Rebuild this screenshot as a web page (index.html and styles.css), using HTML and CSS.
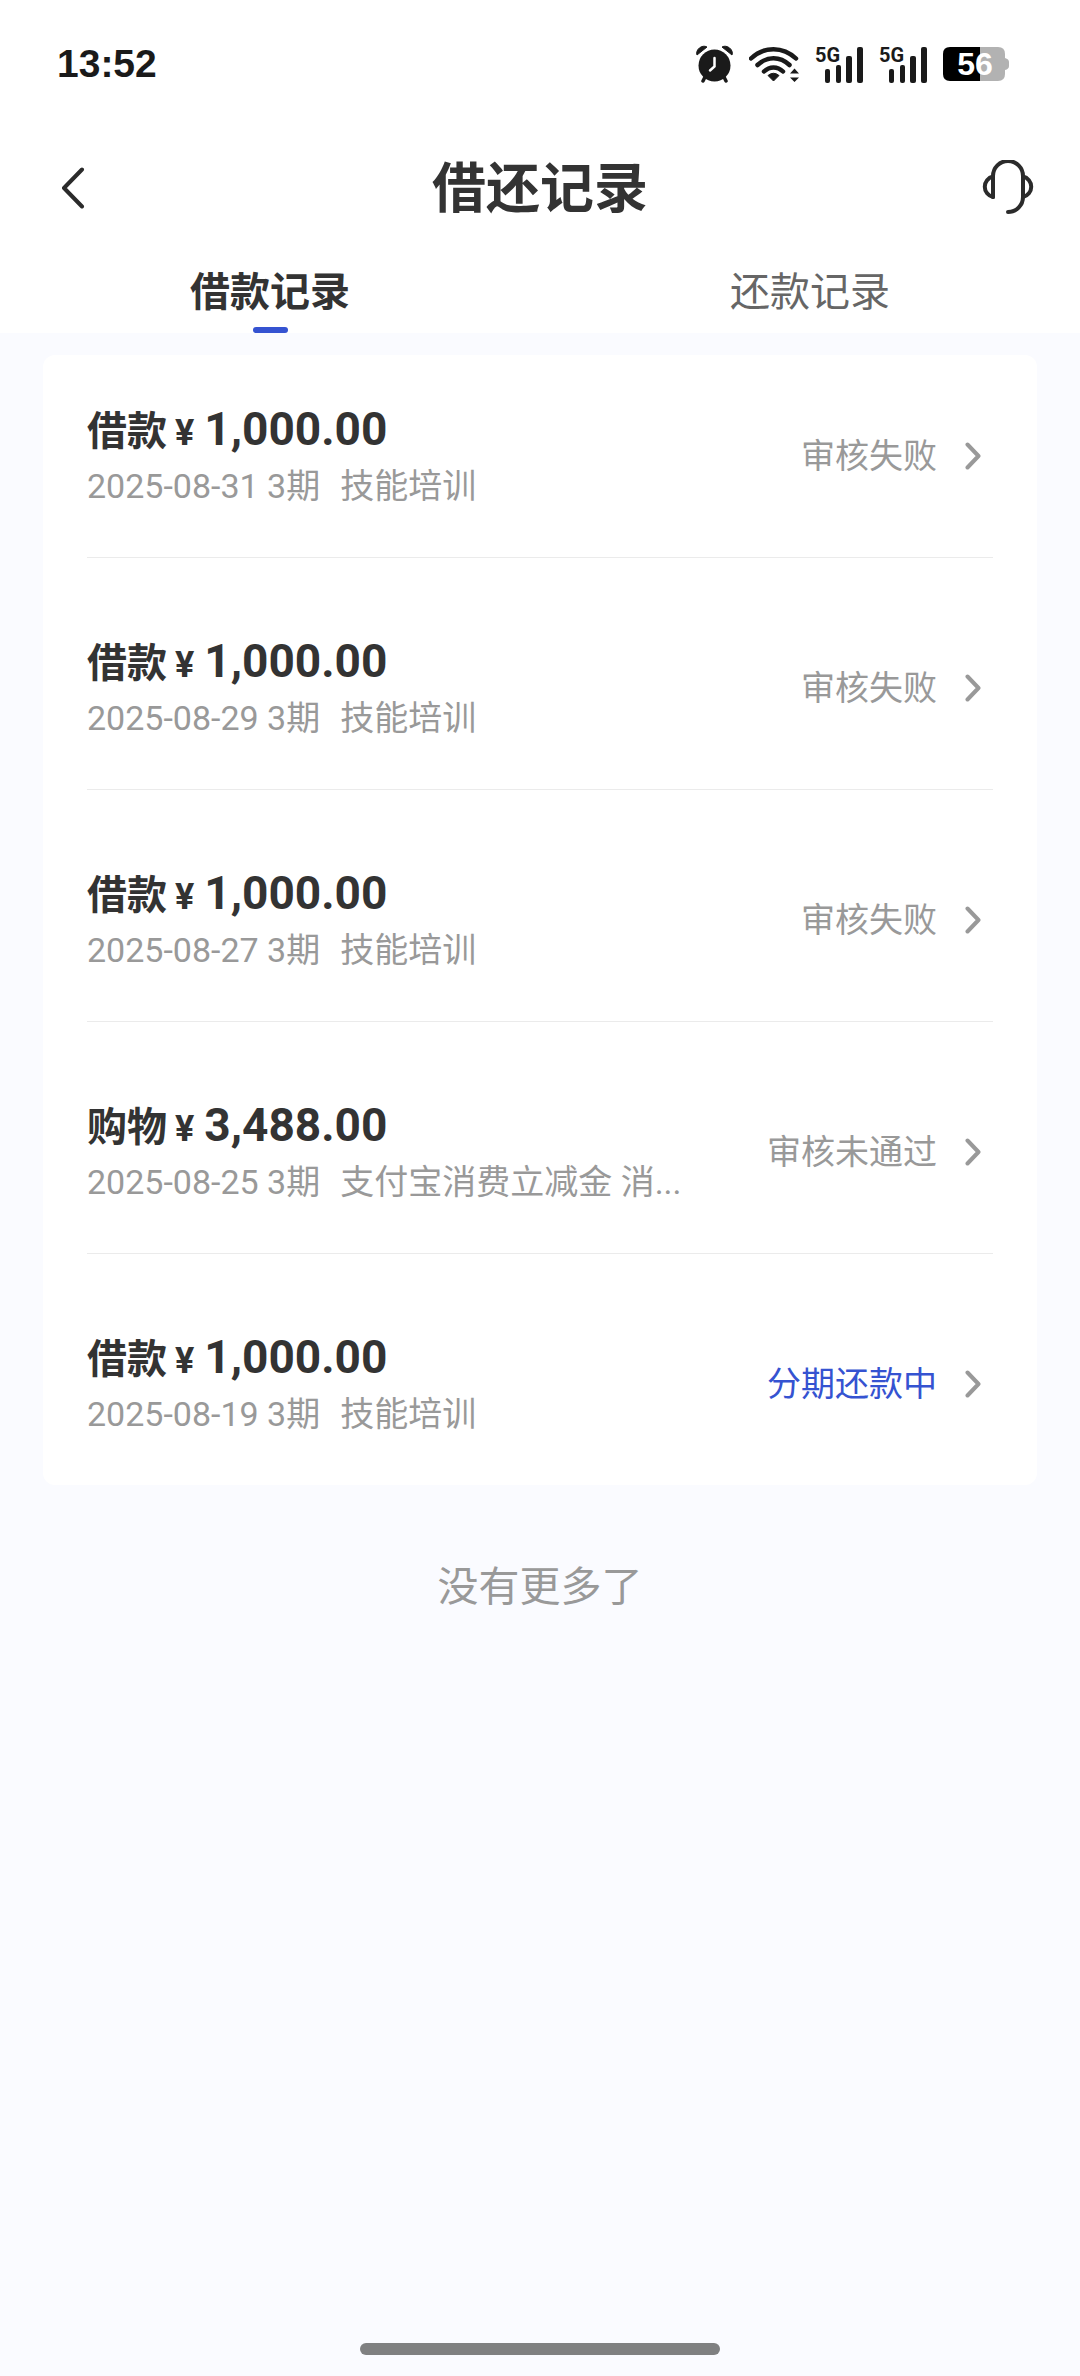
FILE: index.html
```html
<!DOCTYPE html>
<html lang="zh-CN">
<head>
    <meta charset="UTF-8">
    <meta name="viewport" content="width=device-width, initial-scale=1.0">
    <title>借还记录</title>
    <link rel="stylesheet" href="styles.css">
</head>
<body>
    <!-- Shared icons -->
    <svg class="sprite" aria-hidden="true">
        <symbol id="arrow" viewBox="0 0 16 28">
            <path d="M2.5 2.5L13.5 14L2.5 25.5" fill="none" stroke="#999" stroke-width="4" stroke-linecap="round" stroke-linejoin="round"/>
        </symbol>
        <symbol id="bars" viewBox="0 0 48 38">
            <rect x="10" y="24" width="5" height="14" rx="2"/>
            <rect x="21" y="20" width="5" height="18" rx="2"/>
            <rect x="31" y="11" width="6" height="27" rx="2"/>
            <rect x="42" y="2" width="6" height="36" rx="2"/>
        </symbol>
    </svg>

    <div class="status-bar">
        <span class="time">13:52</span>
        <div class="status-icons">
            <svg width="37" height="38" viewBox="0 0 37 38" fill="#1a1a1a">
                <path d="M1 10C-1 5 6-1 11 2Z" stroke="#1a1a1a" stroke-width="1" stroke-linejoin="round"/>
                <path d="M36 10C38 5 31-1 26 2Z" stroke="#1a1a1a" stroke-width="1" stroke-linejoin="round"/>
                <circle cx="18.5" cy="20.5" r="16"/>
                <path d="M9 32L7 36M28 32L30 36" stroke="#1a1a1a" stroke-width="3.5" stroke-linecap="round"/>
                <path d="M18.5 13V21.5L14 25.5" fill="none" stroke="#fff" stroke-width="2.5" stroke-linecap="round"/>
            </svg>
            <svg width="50" height="38" viewBox="0 0 50 38" fill="none" stroke="#1a1a1a" stroke-width="4.5">
                <path d="M2 13.5C15 1 34 1 47 13.5" stroke-linecap="round"/>
                <path d="M8.5 20C18 11 31 11 40.5 20" stroke-linecap="round"/>
                <path d="M15 26.5C20.5 21 28.5 21 34 26.5" stroke-linecap="round"/>
                <path d="M24.5 36L19 30.5Q24.5 26 30 30.5Z" fill="#1a1a1a" stroke-width="1" stroke-linejoin="round"/>
                <path d="M41 28.5L45.5 23.5L50 28.5ZM41 32.5L45.5 37L50 32.5Z" fill="#1a1a1a" stroke="none"/>
            </svg>
            <svg class="signal" width="48" height="38" fill="#1a1a1a">
                <text class="signal-text" x="0" y="17">5G</text>
                <use href="#bars"/>
            </svg>
            <svg class="signal" width="48" height="38" fill="#1a1a1a">
                <text class="signal-text" x="0" y="17">5G</text>
                <use href="#bars"/>
            </svg>
            <svg width="66" height="34" viewBox="0 0 66 34">
                <path d="M37 0H55Q62 0 62 7V11Q66 12 66 15V19Q66 22 62 23V27Q62 34 55 34H37Z" fill="#b2b2b2"/>
                <path d="M37 0H7Q0 0 0 7V27Q0 34 7 34H37Z" fill="#000"/>
                <text class="battery-text" x="32" y="28" text-anchor="middle">56</text>
            </svg>
        </div>
    </div>

    <header class="navbar">
        <button class="back" aria-label="返回">
            <svg width="24" height="42" viewBox="0 0 24 42">
                <path d="M21 2.5L3 21L21 39.5" fill="none" stroke="#2b2b2b" stroke-width="4" stroke-linecap="round" stroke-linejoin="round"/>
            </svg>
        </button>
        <h1>借还记录</h1>
        <button class="service" aria-label="客服">
            <svg width="56" height="56" viewBox="0 0 56 56" fill="none" stroke="#2b2b2b" stroke-width="4" stroke-linecap="round" stroke-linejoin="round">
                <path d="M13 37V16A15 15 0 0 1 43 16V37A15 15 0 0 1 28 52"/>
                <path d="M13 16.5A10.5 10.5 0 0 0 13 37"/>
                <path d="M43 16.5A10.5 10.5 0 0 1 43 37"/>
            </svg>
        </button>
    </header>

    <nav class="tabs">
        <button class="tab active">借款记录</button>
        <button class="tab">还款记录</button>
    </nav>

    <main>
        <div class="records">
            <a class="record" href="#">
                <div class="info">
                    <div class="title">借款<span class="currency">¥</span><span class="amount">1,000.00</span></div>
                    <div class="detail"><span>2025-08-31 3期</span><span class="product">技能培训</span></div>
                </div>
                <span class="state">审核失败</span>
                <svg class="arrow"><use href="#arrow"/></svg>
            </a>
            <a class="record" href="#">
                <div class="info">
                    <div class="title">借款<span class="currency">¥</span><span class="amount">1,000.00</span></div>
                    <div class="detail"><span>2025-08-29 3期</span><span class="product">技能培训</span></div>
                </div>
                <span class="state">审核失败</span>
                <svg class="arrow"><use href="#arrow"/></svg>
            </a>
            <a class="record" href="#">
                <div class="info">
                    <div class="title">借款<span class="currency">¥</span><span class="amount">1,000.00</span></div>
                    <div class="detail"><span>2025-08-27 3期</span><span class="product">技能培训</span></div>
                </div>
                <span class="state">审核失败</span>
                <svg class="arrow"><use href="#arrow"/></svg>
            </a>
            <a class="record" href="#">
                <div class="info">
                    <div class="title">购物<span class="currency">¥</span><span class="amount">3,488.00</span></div>
                    <div class="detail"><span>2025-08-25 3期</span><span class="product">支付宝消费立减金 消...</span></div>
                </div>
                <span class="state">审核未通过</span>
                <svg class="arrow"><use href="#arrow"/></svg>
            </a>
            <a class="record" href="#">
                <div class="info">
                    <div class="title">借款<span class="currency">¥</span><span class="amount">1,000.00</span></div>
                    <div class="detail"><span>2025-08-19 3期</span><span class="product">技能培训</span></div>
                </div>
                <span class="state repaying">分期还款中</span>
                <svg class="arrow"><use href="#arrow"/></svg>
            </a>
        </div>
        <p class="no-more">没有更多了</p>
    </main>

    <div class="home-indicator"></div>
</body>
</html>
```
FILE: styles.css
```css
* {
    box-sizing: border-box;
}
body {
    margin: 0;
    min-height: 100vh;
    display: flex;
    flex-direction: column;
    background-color: #fafbff;
    color: #333;
    font-family: Roboto, "Noto Sans CJK SC", sans-serif;
}
button {
    border: none;
    padding: 0;
    background: none;
    font-family: inherit;
    cursor: pointer;
}
svg {
    display: block;
    flex-shrink: 0;
}
.sprite {
    position: absolute;
    width: 0;
    height: 0;
}

/* Status bar */
.status-bar {
    display: flex;
    justify-content: space-between;
    align-items: center;
    height: 128px;
    padding: 0 71px 0 57px;
    background-color: #fff;
}
.time {
    font-family: "Liberation Sans", sans-serif;
    font-size: 39px;
    font-weight: bold;
    color: #1a1a1a;
}
.status-icons {
    display: flex;
    align-items: center;
    gap: 16px;
}
.signal {
    overflow: visible;
}
.signal-text {
    font-size: 20px;
    font-weight: bold;
}
.battery-text {
    font-family: "Liberation Sans", sans-serif;
    font-size: 32px;
    font-weight: bold;
    fill: #fff;
}

/* Header */
.navbar {
    display: grid;
    grid-template-columns: 1fr auto 1fr;
    align-items: center;
    height: 120px;
    padding: 0 44px;
    background-color: #fff;
}
.navbar h1 {
    margin: 0;
    padding-top: 4px;
    font-size: 54px;
    line-height: 80px;
}
.back {
    justify-self: start;
    padding-left: 17px;
}
.service {
    justify-self: end;
}

/* Tabs */
.tabs {
    display: flex;
    background-color: #fff;
}
.tab {
    flex: 1;
    padding-top: 17px;
    font-size: 40px;
    line-height: 56px;
    color: #666;
}
.tab::after {
    content: "";
    display: block;
    width: 35px;
    height: 6px;
    margin: 6px auto 0;
    border-radius: 3px;
}
.tab.active {
    color: #333;
    font-weight: bold;
}
.tab.active::after {
    background-color: #3553d1;
}

/* Records */
main {
    flex: 1;
    padding: 22px 43px;
}
.records {
    padding: 0 44px;
    background-color: #fff;
    border-radius: 12px;
}
.record {
    display: flex;
    align-items: center;
    padding: 76px 12px 47px 0;
    border-bottom: 1px solid #ebebeb;
    color: inherit;
    text-decoration: none;
}
.record:first-child {
    padding-top: 47px;
}
.record:last-child {
    border-bottom: none;
}
.info {
    flex: 1;
    min-width: 0;
}
.title {
    font-size: 40px;
    font-weight: bold;
    line-height: 60px;
}
.currency {
    margin: 0 10px 0 8px;
    font-size: 36px;
    line-height: 40px;
}
.amount {
    font-size: 46px;
    line-height: 40px;
}
.detail {
    display: flex;
    gap: 20px;
    font-size: 34px;
    line-height: 48px;
    color: #999;
    white-space: nowrap;
}
.product {
    overflow: hidden;
    text-overflow: ellipsis;
}
.state {
    font-size: 34px;
    line-height: 48px;
    color: #999;
}
.repaying {
    color: #3553d1;
}
.arrow {
    width: 16px;
    height: 28px;
    margin-left: 28px;
}
.no-more {
    margin: 72px 0 0;
    text-align: center;
    font-size: 41px;
    line-height: 60px;
    color: #999;
}

.home-indicator {
    width: 360px;
    height: 12px;
    margin: 0 auto 21px;
    border-radius: 6px;
    background-color: #7f8081;
}
```
